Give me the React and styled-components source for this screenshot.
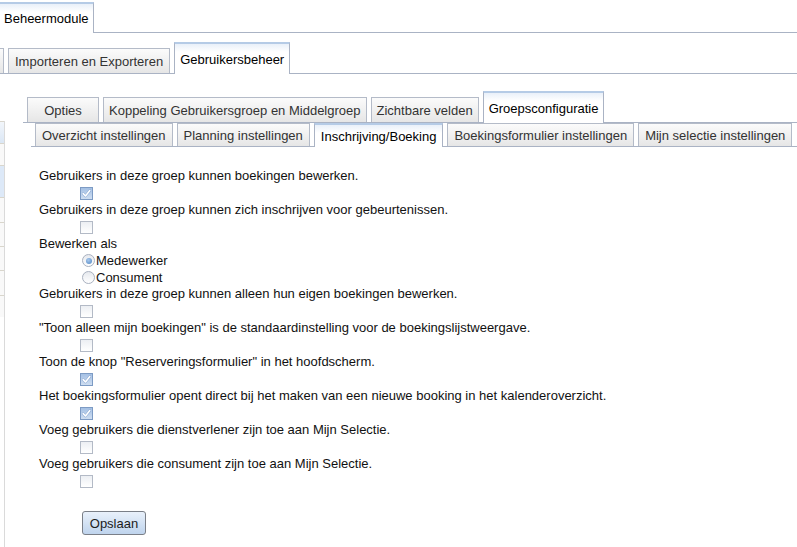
import React from 'react'
import styled, { createGlobalStyle } from 'styled-components'

const GlobalStyle = createGlobalStyle`
    body {
        margin: 0;
        background: #ffffff;
        font-family: "Liberation Sans", Arial, sans-serif;
        font-size: 13px;
        color: #111111;
    }
`

const Page = styled.div`
    width: 797px;
    height: 547px;
    overflow: hidden;
`

const TabStrip = styled.div`
    box-sizing: border-box;
    display: flex;
    align-items: flex-end;
    gap: ${({$gap}) => $gap ?? 4}px;
    height: ${({$height}) => $height}px;
    margin-left: ${({$indent}) => $indent || 0}px;
    padding-left: ${({$pad}) => $pad || 0}px;
    border-bottom: 1px solid #aab3c4;
`

const Tab = styled.div`
    box-sizing: border-box;
    flex: 0 0 auto;
    display: flex;
    align-items: center;
    justify-content: center;
    height: ${({$h}) => $h}px;
    min-width: ${({$min}) => $min || 0}px;
    margin-left: ${({$shift}) => $shift || 0}px;
    padding: 0 ${({$padX}) => $padX ?? 5}px;
    border: 1px solid #b4bbc8;
    border-bottom: none;
    white-space: nowrap;
    color: #333333;
    background: linear-gradient(#fbfbfb, #e6e6e6);
`

const ActiveTab = styled(Tab)`
    margin-bottom: -1px;
    color: #000000;
    border-color: #aab3c4;
    border-top: 2px solid #b5cbe6;
    background: linear-gradient(#e9f0f9 0px, #ffffff 8px, #ffffff);
`

const Body = styled.div`
    display: flex;
    align-items: stretch;
    height: 473px;
`

const Sidebar = styled.div`
    box-sizing: border-box;
    flex: 0 0 5px;
    margin-top: 47px;
    border-right: 1px solid #dadada;
    overflow: hidden;
`

const SideRow = styled.div`
    box-sizing: border-box;
    height: ${({$h}) => $h}px;
    border-top: 1px solid #d9d6cc;
    background: ${({$tone}) => $tone === 'head' ? 'linear-gradient(#f2f6fb, #dbe7f5)' : $tone === 'hi' ? '#dde9f8' : '#f9f9f9'};
`

const Main = styled.div`
    flex: 1 1 auto;
    margin-left: 18px;
`

const Content = styled.div`
    padding: 21px 0 0 8px;
    margin-left: 8px;
`

const Label = styled.div`
    height: 16px;
    line-height: 16px;
    white-space: nowrap;
`

const BoxRow = styled.div`
    height: 18px;
    display: flex;
    align-items: center;
    padding-left: 41px;
`

const Box = styled.span`
    box-sizing: border-box;
    width: 13px;
    height: 13px;
    display: flex;
    align-items: center;
    justify-content: center;
    border: 1px solid ${({$checked}) => $checked ? '#7d9bc4' : '#b3bac6'};
    background: ${({$checked}) => $checked ? 'linear-gradient(#a4c0e4, #cfdef1)' : 'linear-gradient(#eceff3, #ffffff)'};
`

const RadioRow = styled.div`
    height: 17px;
    display: flex;
    align-items: center;
    gap: 1px;
    padding-left: 43px;
`

const RadioDot = styled.span`
    box-sizing: border-box;
    width: 13px;
    height: 13px;
    border-radius: 50%;
    display: flex;
    align-items: center;
    justify-content: center;
    border: 1px solid #a9b1bf;
    background: linear-gradient(#e6e9ee, #ffffff);
    &::after {
        content: '';
        width: 6px;
        height: 6px;
        border-radius: 50%;
        background: ${({$checked}) => $checked ? 'radial-gradient(circle at 40% 35%, #a8c8ec, #4f86c4)' : 'transparent'};
    }
`

const ButtonRow = styled.div`
    padding: 21px 0 0 43px;
`

const Button = styled.button`
    box-sizing: border-box;
    width: 64px;
    height: 24px;
    padding: 0;
    border: 1px solid #7a7f88;
    border-radius: 3px;
    font-family: "Liberation Sans", Arial, sans-serif;
    font-size: 13px;
    color: #1c1c1c;
    background: linear-gradient(#e9f1fb, #bfd4ed);
`

const Check = () => (
    <svg width="9" height="9" viewBox="0 0 9 9">
        <path d="M1.2 4.6 L3.5 7 L7.8 1.6" fill="none" stroke="#5f86bd" strokeWidth="2.6" strokeLinecap="round" strokeLinejoin="round" opacity="0.5" />
        <path d="M1.2 4.6 L3.5 7 L7.8 1.6" fill="none" stroke="#ffffff" strokeWidth="1.6" strokeLinecap="round" strokeLinejoin="round" />
    </svg>
)

const CheckField = ({label, checked}) => (
    <>
        <Label>{label}</Label>
        <BoxRow>
            <Box $checked={checked}>{checked && <Check />}</Box>
        </BoxRow>
    </>
)

const settings = [
    ['Gebruikers in deze groep kunnen alleen hun eigen boekingen bewerken.', false],
    ['"Toon alleen mijn boekingen" is de standaardinstelling voor de boekingslijstweergave.', false],
    ['Toon de knop "Reserveringsformulier" in het hoofdscherm.', true],
    ['Het boekingsformulier opent direct bij het maken van een nieuwe booking in het kalenderoverzicht.', true],
    ['Voeg gebruikers die dienstverlener zijn toe aan Mijn Selectie.', false],
    ['Voeg gebruikers die consument zijn toe aan Mijn Selectie.', false],
]

const sideRows = [[22, 'head'], [22], [32, 'hi'], [25], [24], [24], [25], [22]]

const App = () => {
    return (
        <Page>
            <GlobalStyle />
            <TabStrip $height={33}>
                <ActiveTab $h={31} $shift={-1} $padX={4}>Beheermodule</ActiveTab>
            </TabStrip>
            <TabStrip $height={41}>
                <Tab $h={25} $shift={-56} style={{width: 60}}></Tab>
                <Tab $h={25} $padX={6}>Importeren en Exporteren</Tab>
                <ActiveTab $h={32}>Gebruikersbeheer</ActiveTab>
            </TabStrip>
            <Body>
                <Sidebar>
                    {sideRows.map(([h, tone], i) => <SideRow key={i} $h={h} $tone={tone} />)}
                </Sidebar>
                <Main>
                    <TabStrip $height={49} $pad={4}>
                        <Tab $h={25} $min={72}>Opties</Tab>
                        <Tab $h={25}>Koppeling Gebruikersgroep en Middelgroep</Tab>
                        <Tab $h={25}>Zichtbare velden</Tab>
                        <ActiveTab $h={32}>Groepsconfiguratie</ActiveTab>
                    </TabStrip>
                    <TabStrip $height={24} $indent={8} $pad={4}>
                        <Tab $h={23} $padX={6}>Overzicht instellingen</Tab>
                        <Tab $h={23} $padX={6}>Planning instellingen</Tab>
                        <ActiveTab $h={24} $padX={6}>Inschrijving/Boeking</ActiveTab>
                        <Tab $h={23} $padX={6}>Boekingsformulier instellingen</Tab>
                        <Tab $h={23} $padX={6}>Mijn selectie instellingen</Tab>
                    </TabStrip>
                    <Content>
                        <CheckField label="Gebruikers in deze groep kunnen boekingen bewerken." checked />
                        <CheckField label="Gebruikers in deze groep kunnen zich inschrijven voor gebeurtenissen." />
                        <Label>Bewerken als</Label>
                        <RadioRow><RadioDot $checked />Medewerker</RadioRow>
                        <RadioRow><RadioDot />Consument</RadioRow>
                        {settings.map(([label, checked]) => (
                            <CheckField key={label} label={label} checked={checked} />
                        ))}
                        <ButtonRow>
                            <Button>Opslaan</Button>
                        </ButtonRow>
                    </Content>
                </Main>
            </Body>
        </Page>
    )
}

export default App
